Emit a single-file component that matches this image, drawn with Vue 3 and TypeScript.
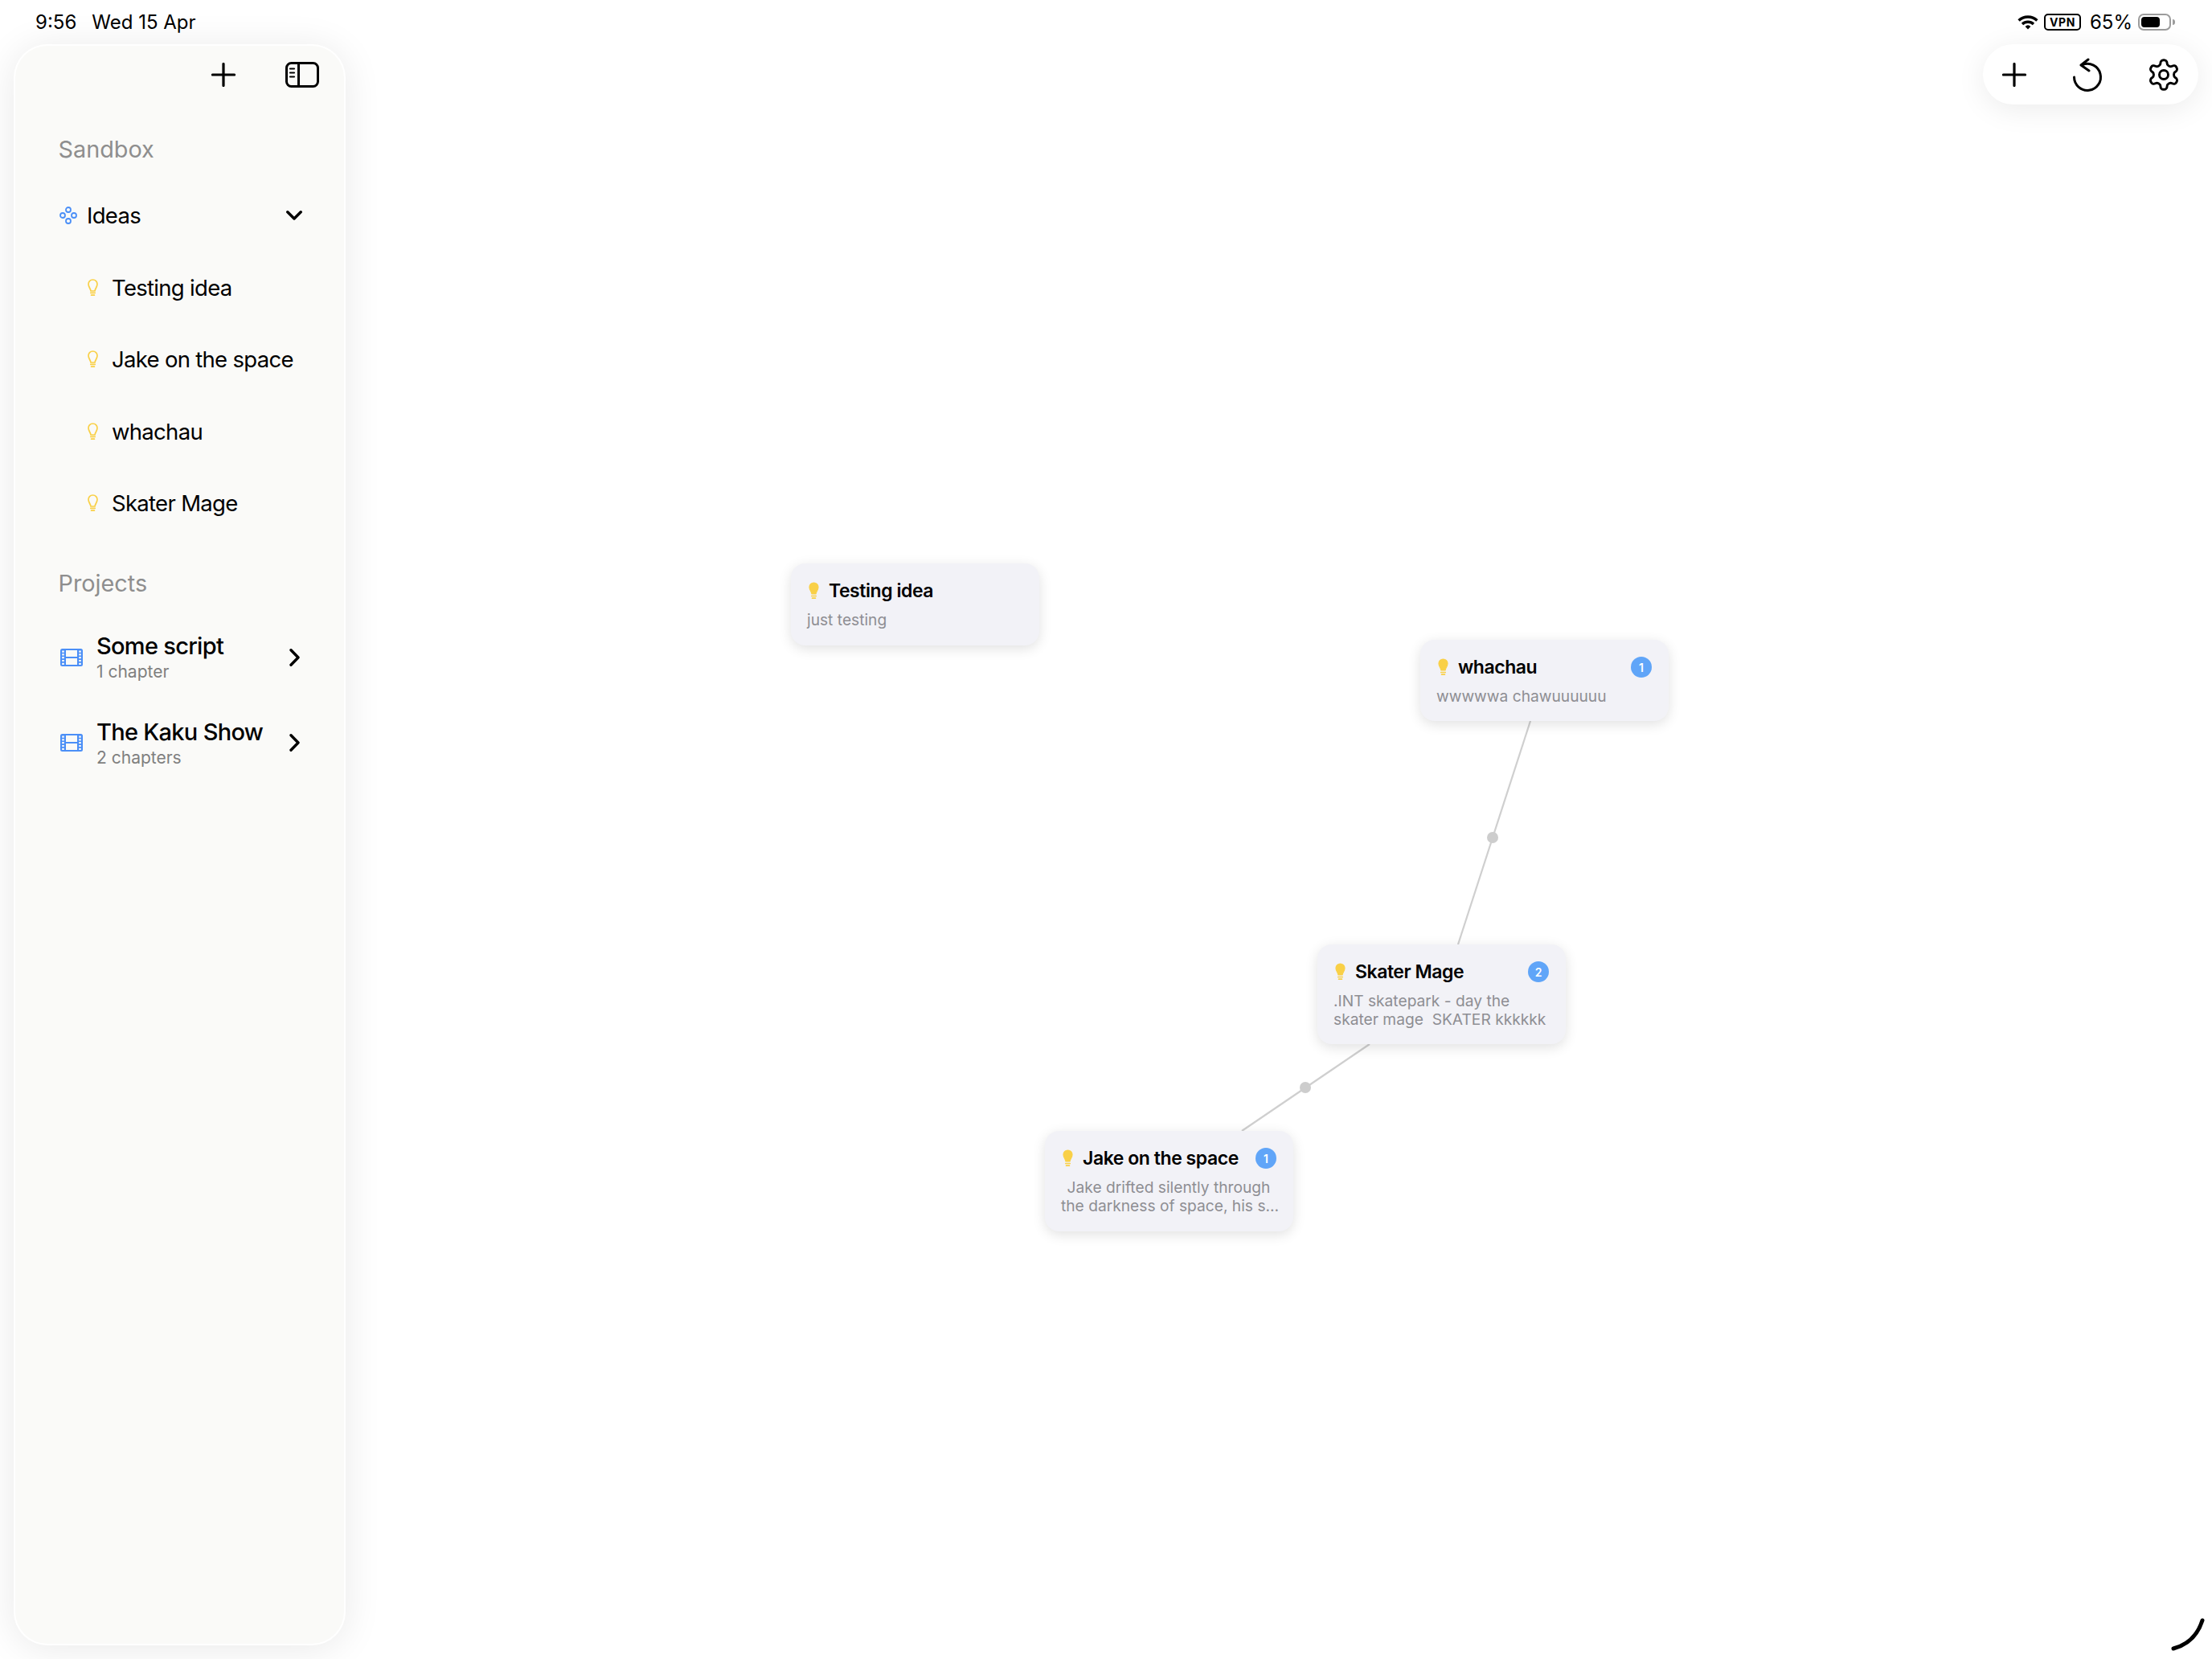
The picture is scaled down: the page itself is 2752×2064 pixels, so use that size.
<script setup lang="ts">
interface IdeaNode {
  title: string
  lines: string[]
  x: number
  y: number
  h: number
  badge?: number
  centered?: boolean
}

const nodes: IdeaNode[] = [
  { title: 'Testing idea', lines: ['just testing'], x: 984, y: 701, h: 102 },
  { title: 'whachau', lines: ['wwwwwa chawuuuuuu'], x: 1767, y: 796, h: 101, badge: 1 },
  { title: 'Skater Mage', lines: ['.INT skatepark - day the', 'skater mage  SKATER kkkkkk'], x: 1639, y: 1175, h: 124, badge: 2 },
  { title: 'Jake on the space', lines: ['Jake drifted silently through', 'the darkness of space, his s…'], x: 1300, y: 1407, h: 125, badge: 1, centered: true },
]
const ideas = ['Testing idea', 'Jake on the space', 'whachau', 'Skater Mage']
const projects = [
  { name: 'Some script', sub: '1 chapter' },
  { name: 'The Kaku Show', sub: '2 chapters' },
]
const bulbPath = 'M6.5 1C3.2 1 1 3.4 1 6.6C1 9.7 3.4 11.6 4 15H9C9.6 11.6 12 9.7 12 6.6C12 3.4 9.8 1 6.5 1Z'
const gearPath = 'M12.22 2h-.44a2 2 0 0 0-2 2v.18a2 2 0 0 1-1 1.73l-.43.25a2 2 0 0 1-2 0l-.15-.08a2 2 0 0 0-2.73.73l-.22.38a2 2 0 0 0 .73 2.73l.15.1a2 2 0 0 1 1 1.72v.51a2 2 0 0 1-1 1.74l-.15.09a2 2 0 0 0-.73 2.73l.22.38a2 2 0 0 0 2.73.73l.15-.08a2 2 0 0 1 2 0l.43.25a2 2 0 0 1 1 1.73V20a2 2 0 0 0 2 2h.44a2 2 0 0 0 2-2v-.18a2 2 0 0 1 1-1.73l.43-.25a2 2 0 0 1 2 0l.15.08a2 2 0 0 0 2.73-.73l.22-.39a2 2 0 0 0-.73-2.73l-.15-.08a2 2 0 0 1-1-1.74v-.5a2 2 0 0 1 1-1.74l.15-.09a2 2 0 0 0 .73-2.73l-.22-.38a2 2 0 0 0-2.73-.73l-.15.08a2 2 0 0 1-2 0l-.43-.25a2 2 0 0 1-1-1.73V4a2 2 0 0 0-2-2z'
</script>

<template>
  <div class="screen">
    <div class="canvas">
      <svg class="edges" viewBox="0 0 2752 2064" width="2752" height="2064">
        <line x1="1904" y1="897" x2="1814" y2="1175" class="edge" />
        <circle cx="1857" cy="1042" r="7" class="dot" />
        <line x1="1704" y1="1299" x2="1545" y2="1407" class="edge" />
        <circle cx="1624" cy="1353" r="7" class="dot" />
        <path d="M2704 2051Q2731 2044 2740 2016" class="pen" />
      </svg>
      <div
        v-for="n in nodes"
        :key="n.title"
        class="node"
        :style="{ left: n.x + 'px', top: n.y + 'px', height: n.h + 'px' }"
      >
        <div class="node-head">
          <svg class="node-bulb" viewBox="0 0 13 22" width="13" height="22">
            <path :d="bulbPath" fill="#f9d047" stroke="#f9d047" stroke-width="1.2" />
            <path d="M3.8 17.5H9.2M4.6 20.2H8.4" stroke="#f9d047" stroke-width="1.7" stroke-linecap="round" />
          </svg>
          <span class="node-title">{{ n.title }}</span>
          <span v-if="n.badge" class="badge">{{ n.badge }}</span>
        </div>
        <div class="node-desc" :class="{ centered: n.centered }">
          <span v-for="l in n.lines" :key="l" class="desc-line">{{ l }}</span>
        </div>
      </div>
    </div>

    <div class="overlay">
      <header class="status">
        <span class="time">9:56</span>
        <span class="date">Wed 15 Apr</span>
        <span class="status-gap"></span>
        <svg class="wifi" viewBox="0 0 26 18" width="26" height="18" fill="none" stroke="#000" stroke-width="3.4">
          <path d="M1.6 6.6A16.5 16.5 0 0 1 24.4 6.6" />
          <path d="M6 11A10.2 10.2 0 0 1 20 11" />
          <path d="M13 17.5L9.6 13.9A5 5 0 0 1 16.4 13.9Z" fill="#000" stroke="none" />
        </svg>
        <span class="vpn">VPN</span>
        <span class="pct">65%</span>
        <span class="battery"><span class="battery-fill"></span></span>
        <span class="nub"></span>
      </header>

      <div class="main">
        <aside class="sidebar">
          <div class="side-head">
            <svg viewBox="0 0 30 30" width="30" height="30" class="ic" stroke-width="3.2">
              <path d="M15 1.5V28.5M1.5 15H28.5" />
            </svg>
            <svg viewBox="0 0 42 32" width="42" height="32" class="ic" stroke-width="3">
              <rect x="1.5" y="1.5" width="39" height="29" rx="6" />
              <path d="M16.5 1.5V30.5" />
              <path d="M6 8.5H11M6 13.5H11M6 18.5H11" stroke-width="2.2" />
            </svg>
          </div>

          <div class="label first">Sandbox</div>
          <div class="ideas-row">
            <svg viewBox="0 0 22 22" width="22" height="22" class="cluster">
              <circle cx="11" cy="4" r="3" />
              <circle cx="11" cy="18" r="3" />
              <circle cx="4" cy="11" r="3" />
              <circle cx="18" cy="11" r="3" />
            </svg>
            <span class="ideas-name">Ideas</span>
            <svg viewBox="0 0 20 12" width="20" height="12" class="ic caret" stroke-width="3.4">
              <path d="M1.8 1.8L10 10L18.2 1.8" />
            </svg>
          </div>
          <div v-for="i in ideas" :key="i" class="idea-row">
            <svg viewBox="0 0 13 22" width="13" height="22" class="idea-bulb">
              <path :d="bulbPath" fill="none" stroke="#f9d047" stroke-width="1.7" />
              <path d="M3.8 17.3H9.2M4.6 20.2H8.4" stroke="#f9d047" stroke-width="1.7" stroke-linecap="round" />
            </svg>
            <span class="idea-name">{{ i }}</span>
          </div>

          <div class="label second">Projects</div>
          <div v-for="p in projects" :key="p.name" class="project-row">
            <svg viewBox="0 0 28 22" width="28" height="22" class="film">
              <rect x="0" y="0" width="28" height="22" rx="2.5" fill="#4b8ff7" />
              <rect x="7" y="2" width="14" height="8" fill="#fafaf8" />
              <rect x="7" y="12" width="14" height="8" fill="#fafaf8" />
              <path d="M3.5 2.5V20.5M24.5 2.5V20.5" stroke="#fafaf8" stroke-width="2.6" stroke-dasharray="2.2 1.6" />
            </svg>
            <div class="project-text">
              <span class="project-name">{{ p.name }}</span>
              <span class="project-sub">{{ p.sub }}</span>
            </div>
            <svg viewBox="0 0 13 22" width="13" height="22" class="ic go" stroke-width="3.4">
              <path d="M2 1.8L11 11L2 20.2" />
            </svg>
          </div>
        </aside>

        <div class="toolbar">
          <svg viewBox="0 0 30 30" width="30" height="30" class="ic tool-plus" stroke-width="3.2">
            <path d="M15 1.5V28.5M1.5 15H28.5" />
          </svg>
          <svg viewBox="0 0 44 44" width="44" height="44" class="ic tool-undo" stroke-width="3">
            <path d="M16 8.5A16.5 16.5 0 1 1 5.5 24" />
            <path d="M23 2L14 9L24 16" />
          </svg>
          <svg viewBox="0 0 24 24" width="44" height="44" class="ic tool-gear" stroke-width="1.6">
            <path :d="gearPath" />
            <circle cx="12" cy="12" r="3" />
          </svg>
        </div>
      </div>
    </div>
  </div>
</template>

<style scoped>
.screen {
  width: 2752px;
  height: 2064px;
  display: grid;
  background: #fff;
  color: #000;
  font-family: Inter, "Liberation Sans", sans-serif;
  overflow: hidden;
}
.canvas {
  grid-area: 1 / 1;
  position: relative;
}
.edges {
  position: absolute;
  left: 0;
  top: 0;
}
.edge {
  stroke: #cfcfcf;
  stroke-width: 2.2;
}
.dot {
  fill: #cdcdcd;
}
.pen {
  fill: none;
  stroke: #000;
  stroke-width: 5;
  stroke-linecap: round;
}
.node {
  position: absolute;
  box-sizing: border-box;
  width: 309px;
  padding: 21px 21px 0 20px;
  background: #f2f2f7;
  border-radius: 18px;
  box-shadow: 0 4px 16px rgba(0, 0, 0, 0.12);
}
.node-head {
  display: flex;
  align-items: center;
  height: 26px;
}
.node-bulb {
  margin-left: 2px;
  margin-right: 12px;
  flex: none;
}
.node-title {
  flex: 1;
  font-size: 23px;
  font-weight: 600;
  letter-spacing: -0.45px;
  white-space: nowrap;
}
.badge {
  width: 26px;
  height: 26px;
  border-radius: 50%;
  background: #60a5f8;
  color: #fff;
  font-size: 14px;
  font-weight: 600;
  display: flex;
  align-items: center;
  justify-content: center;
  flex: none;
}
.node-desc {
  margin-top: 12px;
  font-size: 19.2px;
  line-height: 23px;
  color: #8e8e93;
}
.node-desc.centered {
  text-align: center;
}
.desc-line {
  display: block;
  white-space: pre;
}
.overlay {
  grid-area: 1 / 1;
  position: relative;
  display: flex;
  flex-direction: column;
  padding: 0 17px 17px;
  min-height: 0;
}
.status {
  display: flex;
  align-items: center;
  height: 55px;
  flex: none;
  font-size: 24px;
  padding-left: 27px;
  padding-right: 29px;
}
.date {
  margin-left: 19px;
}
.status-gap {
  flex: 1;
}
.wifi {
  margin-right: 7px;
}
.vpn {
  box-sizing: border-box;
  width: 46px;
  height: 21px;
  border: 2px solid #000;
  border-radius: 5px;
  font-size: 14px;
  font-weight: 700;
  letter-spacing: 0.6px;
  display: flex;
  align-items: center;
  justify-content: center;
  margin-right: 11px;
}
.pct {
  margin-right: 7px;
}
.battery {
  box-sizing: border-box;
  width: 41px;
  height: 21px;
  border: 2px solid #9c9c9c;
  border-radius: 7px;
  padding: 2px;
  display: flex;
}
.battery-fill {
  width: 23px;
  background: #000;
  border-radius: 4px;
}
.nub {
  width: 3px;
  height: 7px;
  margin-left: 2px;
  background: #9c9c9c;
  border-radius: 0 3px 3px 0;
}
.main {
  flex: 1;
  display: flex;
  justify-content: space-between;
  align-items: flex-start;
  min-height: 0;
}
.sidebar {
  box-sizing: border-box;
  width: 413px;
  height: 100%;
  background: #fafaf8;
  border-radius: 42px;
  box-shadow: inset 0 0 0 2px #fff, 0 4px 48px rgba(0, 0, 0, 0.09);
  display: flex;
  flex-direction: column;
}
.ic {
  fill: none;
  stroke: #000;
  stroke-linecap: round;
  stroke-linejoin: round;
  flex: none;
}
.side-head {
  height: 76px;
  flex: none;
  display: flex;
  align-items: center;
  justify-content: flex-end;
  gap: 62px;
  padding-right: 33px;
}
.label {
  height: 56px;
  flex: none;
  padding-left: 55.5px;
  font-size: 28.8px;
  line-height: 56px;
  color: #8e8e8e;
}
.label.first {
  margin-top: 27px;
}
.label.second {
  margin-top: 27px;
  margin-bottom: 11px;
}
.ideas-row {
  margin-top: 9px;
  height: 90px;
  flex: none;
  display: flex;
  align-items: center;
  padding-left: 57px;
  padding-right: 54px;
}
.cluster {
  flex: none;
  fill: none;
  stroke: #4b8ff7;
  stroke-width: 1.8;
}
.ideas-name {
  flex: 1;
  margin-left: 12px;
  font-size: 27.5px;
  letter-spacing: -0.7px;
}
.idea-row {
  height: 89.5px;
  flex: none;
  display: flex;
  align-items: center;
  padding-left: 92px;
}
.idea-bulb {
  flex: none;
}
.idea-name {
  margin-left: 17px;
  font-size: 27.5px;
  letter-spacing: -0.7px;
}
.project-row {
  height: 106.5px;
  flex: none;
  display: flex;
  align-items: center;
  padding-left: 58px;
  padding-right: 57px;
}
.film {
  flex: none;
  margin-top: -1px;
}
.go {
  margin-top: -1px;
}
.project-text {
  flex: 1;
  margin-top: -2px;
  margin-left: 17px;
  display: flex;
  flex-direction: column;
}
.project-name {
  font-size: 29px;
  font-weight: 500;
  letter-spacing: -0.7px;
  line-height: 38px;
}
.project-sub {
  font-size: 21px;
  line-height: 26px;
  color: #7f7f7f;
}
.toolbar {
  box-sizing: border-box;
  width: 268px;
  height: 75px;
  border-radius: 38px;
  background: #fff;
  box-shadow: 0 6px 36px rgba(0, 0, 0, 0.08);
  display: flex;
  align-items: center;
  padding-left: 24px;
}
.tool-undo {
  margin-left: 54px;
  margin-top: 2px;
}
.tool-gear {
  margin-left: 51px;
}
</style>

<style>
html,
body {
  margin: 0;
  background: #fff;
}
</style>
